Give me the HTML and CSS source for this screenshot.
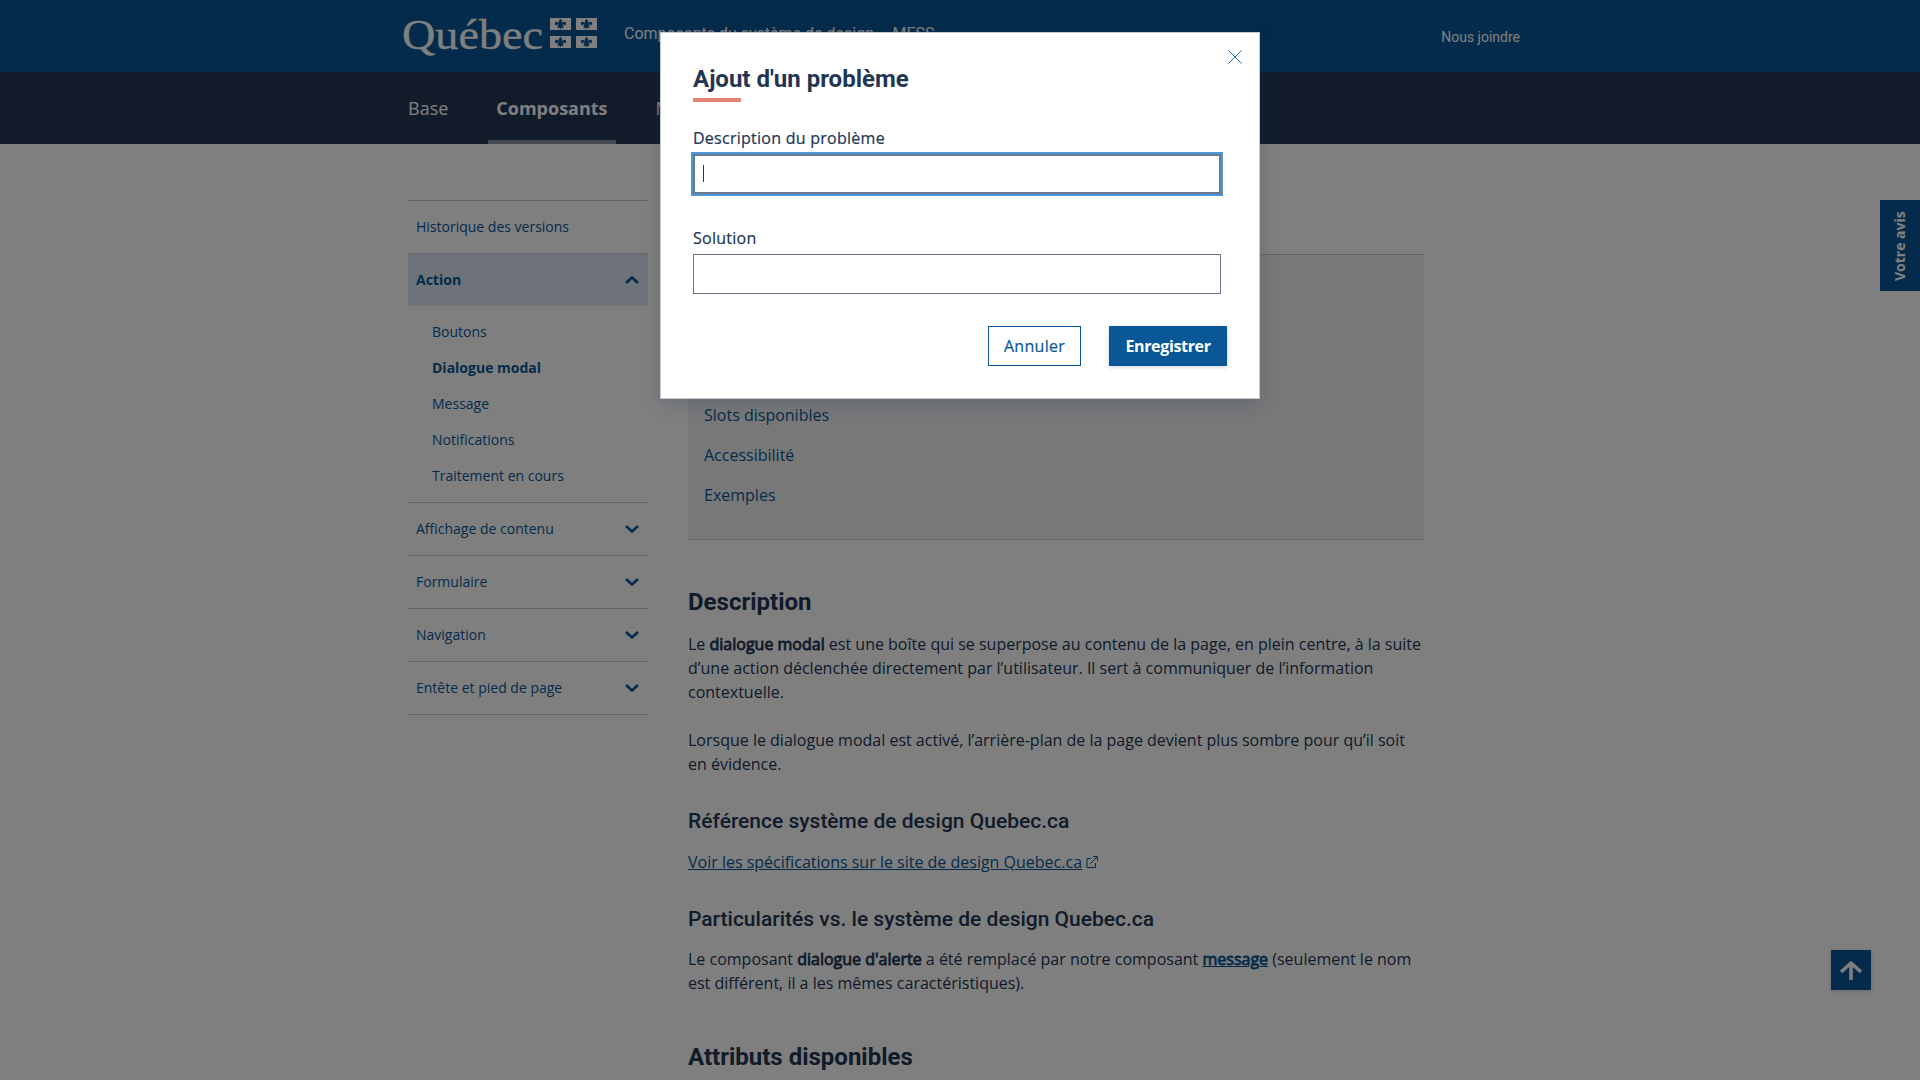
FILE: index.html
```html
<!DOCTYPE html>
<html lang="fr">
<head>
<meta charset="utf-8">
<title>Dialogue modal</title>
<link rel="stylesheet" href="styles.css">
</head>
<body>
<header class="piv">
  <div class="piv-inner">
    <svg class="logo" width="200" height="48" viewBox="0 0 200 48" role="img" aria-label="Québec">
      <defs>
        <g id="lys">
          <rect width="21" height="12" fill="#fff"/>
          <path d="M10.5 .8 C12.6 2.8 12.6 4.4 11.6 6.6 C12 3.4 15.8 2.6 16.1 5.2 C16.2 7 14.8 7.6 13.8 6.9 C14.2 5.6 13 5.8 12.6 7 H13.4 V8.4 H12.3 C12.5 9.2 13.2 9.4 13.6 9 C13.4 10.6 11.8 10.4 11.4 9.6 L10.5 11.4 L9.6 9.6 C9.2 10.4 7.6 10.6 7.4 9 C7.8 9.4 8.5 9.2 8.7 8.4 H7.6 V7 H8.4 C8 5.8 6.8 5.6 7.2 6.9 C6.2 7.6 4.8 7 4.9 5.2 C5.2 2.6 9 3.4 9.4 6.6 C8.4 4.4 8.4 2.8 10.5 .8Z" fill="#095797"/>
        </g>
      </defs>
      <text class="wordmark" x="2" y="36.5" textLength="141" lengthAdjust="spacingAndGlyphs">Québec</text>
      <use href="#lys" x="150" y="6"/><use href="#lys" x="176" y="6"/>
      <use href="#lys" x="150" y="24"/><use href="#lys" x="176" y="24"/>
    </svg>
    <span class="site-title">Composants du système de design – MESS</span>
    <a class="contact">Nous joindre</a>
  </div>
</header>
<nav class="menu">
  <div class="menu-inner">
    <a class="menu-item">Base</a>
    <a class="menu-item active">Composants</a>
    <a class="menu-item">Modèles</a>
  </div>
</nav>
<div class="page">
  <aside class="side">
    <a class="side-item">Historique des versions</a>
    <a class="side-item open">Action<svg class="chev" viewBox="0 0 14 8"><path d="M1 7L7 1.5L13 7"/></svg></a>
    <div class="sub">
      <a>Boutons</a><a class="current">Dialogue modal</a><a>Message</a><a>Notifications</a><a>Traitement en cours</a>
    </div>
    <a class="side-item">Affichage de contenu<svg class="chev" viewBox="0 0 14 8"><path d="M1 1L7 6.5L13 1"/></svg></a>
    <a class="side-item">Formulaire<svg class="chev" viewBox="0 0 14 8"><path d="M1 1L7 6.5L13 1"/></svg></a>
    <a class="side-item">Navigation<svg class="chev" viewBox="0 0 14 8"><path d="M1 1L7 6.5L13 1"/></svg></a>
    <a class="side-item last">Entête et pied de page<svg class="chev" viewBox="0 0 14 8"><path d="M1 1L7 6.5L13 1"/></svg></a>
  </aside>
  <main class="content">
    <div class="toc">
      <a>Slots disponibles</a><a>Accessibilité</a><a>Exemples</a>
    </div>
    <h2>Description</h2>
    <p>Le <b>dialogue modal</b> est une boîte qui se superpose au contenu de la page, en plein centre, à la suite d’une action déclenchée directement par l’utilisateur. Il sert à communiquer de l’information contextuelle.</p>
    <p>Lorsque le dialogue modal est activé, l’arrière-plan de la page devient plus sombre pour qu’il soit en évidence.</p>
    <h3>Référence système de design Quebec.ca</h3>
    <p><a class="link">Voir les spécifications sur le site de design Quebec.ca</a><svg class="ext" viewBox="0 0 12 12"><path d="M5 2.5H1V11.5H9.5V7M7 .6H11.4V5M11.2 .8L4.5 7.5"/></svg></p>
    <h3>Particularités vs. le système de design Quebec.ca</h3>
    <p>Le composant <b>dialogue d'alerte</b> a été remplacé par notre composant <a class="link"><b>message</b></a> (seulement le nom est différent, il a les mêmes caractéristiques).</p>
    <h2>Attributs disponibles</h2>
  </main>
</div>
<a class="feedback">Votre avis</a>
<a class="to-top"><svg width="24" height="20" viewBox="0 0 24 20"><path d="M12 20V3M2 12L12 3L22 12"/></svg></a>
<div class="overlay">
  <div class="dialog" role="dialog" aria-label="Ajout d'un problème">
    <svg class="close" viewBox="0 0 14 14"><path d="M.4 .4L13.6 13.6M13.6 .4L.4 13.6"/></svg>
    <h1>Ajout d'un problème</h1>
    <label>Description du problème</label>
    <div class="field focused"><span class="caret"></span></div>
    <label>Solution</label>
    <div class="field"></div>
    <div class="actions">
      <button class="btn secondary">Annuler</button>
      <button class="btn primary">Enregistrer</button>
    </div>
  </div>
</div>
</body>
</html>
```
FILE: styles.css
```css
* { box-sizing: border-box; }
body {
  margin: 0;
  height: 1080px;
  overflow: hidden;
  background: #fff;
  color: #223654;
  font: 16px/24px "Open Sans", sans-serif;
}
.piv { height: 72px; background: #095797; color: #fff; font-family: Roboto, sans-serif; }
.piv-inner { width: 1120px; height: 72px; margin-left: 400px; display: flex; align-items: flex-start; }
.logo { margin-top: 12px; flex: none; overflow: visible; }
.wordmark { font: 43px "Liberation Serif", serif; fill: #fff; stroke: #fff; stroke-width: .3; }
.site-title { margin: 22px 0 0 24px; white-space: nowrap; }
.contact { margin: 25px 0 0 auto; font-size: 14px; }
.menu { height: 72px; background: #223654; color: #fff; font-size: 18px; }
.menu-inner { display: flex; margin-left: 400px; gap: 32px; }
.menu-item { height: 72px; padding: 24px 8px 0; }
.menu-item.active { font-weight: 700; border-bottom: 4px solid #8893a2; }

.page { display: flex; gap: 40px; margin-left: 408px; width: 1016px; }
.side { width: 240px; flex: none; padding-top: 56px; font-size: 14px; color: #095797; }
.side-item {
  display: flex; align-items: center; justify-content: space-between;
  height: 53px; padding: 0 9px 0 8px; border-top: 1px solid #c5cad2;
}
.side-item.open { background: #dae6f0; font-weight: 700; }
.side-item.last { height: 54px; border-bottom: 1px solid #c5cad2; }
.chev { width: 14px; height: 8px; fill: none; stroke: #095797; stroke-width: 2.6; overflow: visible; }
.sub { display: flex; flex-direction: column; padding: 8px 0 8px 24px; }
.sub a { height: 36px; line-height: 36px; }
.current { font-weight: 700; }

.content { width: 736px; padding-top: 110px; }
.toc {
  height: 286px; padding-bottom: 24px; padding-left: 16px;
  display: flex; flex-direction: column; justify-content: flex-end;
  background: #f1f1f2; border-top: 1px solid #c5cad2; border-bottom: 1px solid #c5cad2; color: #095797;
}
.toc a { height: 40px; line-height: 40px; }
h1, h2, h3 { font-family: Roboto, sans-serif; margin: 0; }
h2 { font-size: 24px; line-height: 28px; font-weight: 700; margin: 48px 0 16px; }
h3 { font-size: 21px; line-height: 25.5px; font-weight: 500; margin: 33px 0 15px; }
p { margin: 0 0 24px; }
b { font-weight: 400; -webkit-text-stroke: .8px currentColor; }
.link { color: #095797; text-decoration: underline; }
.ext { width: 12px; height: 12px; margin-left: 4px; fill: none; stroke: #095797; }

.feedback {
  position: absolute; right: 0; top: 200px; width: 40px; height: 91px; padding-bottom: 2px;
  writing-mode: vertical-rl; transform: rotate(180deg);
  background: #095797; color: #fff; font-size: 14px; font-weight: 700; line-height: 40px; text-align: center;
}
.to-top {
  position: absolute; left: 1831px; top: 950px; width: 40px; height: 40px;
  display: flex; align-items: center; justify-content: center;
  background: #095797; box-shadow: 0 1px 4px rgba(34, 54, 84, .24);
}
.to-top path { fill: none; stroke: #fff; stroke-width: 3.6; stroke-linejoin: round; }

.overlay {
  position: absolute; inset: 0; padding-top: 32px;
  background: rgba(0, 0, 0, .5);
  display: flex; align-items: flex-start; justify-content: center;
}
.dialog {
  position: relative; width: 600px; height: 367px; padding: 30px 32px;
  background: #fff; border: 1px solid #c5cad2;
  box-shadow: 0 4px 16px rgba(34, 54, 84, .24);
}
.close { position: absolute; right: 17px; top: 17px; width: 14px; height: 14px; fill: none; stroke: #095797; stroke-width: .9; }
h1 { font-size: 24px; line-height: 32px; font-weight: 700; }
h1::after { content: ""; display: block; width: 48px; height: 4px; margin-top: 3px; background: #e58271; }
label { display: block; font-weight: 500; letter-spacing: .26px; margin-top: 24px; line-height: 24px; -webkit-text-stroke: .2px currentColor; }
.field {
  width: 528px; height: 40px; margin-top: 4px; padding: 9px 8px;
  border: 1px solid #6b778a;
}
.focused { border-width: 2px; outline: 2px solid #4a98d9; margin-bottom: 32px; }
.caret { display: block; width: 1px; height: 17px; background: #223654; }
.actions { display: flex; gap: 28px; justify-content: flex-end; margin-top: 32px; }
.btn {
  height: 40px; padding: 0; border: 1px solid #095797;
  font: 500 16px/24px "Open Sans", sans-serif;
}
.secondary { width: 93px; background: #fff; color: #095797; letter-spacing: .28px; -webkit-text-stroke: .2px currentColor; }
.primary { width: 118px; background: #095797; color: #fff; font-weight: 700; letter-spacing: -.35px; box-shadow: 0 1px 4px rgba(34, 54, 84, .24); }
```
